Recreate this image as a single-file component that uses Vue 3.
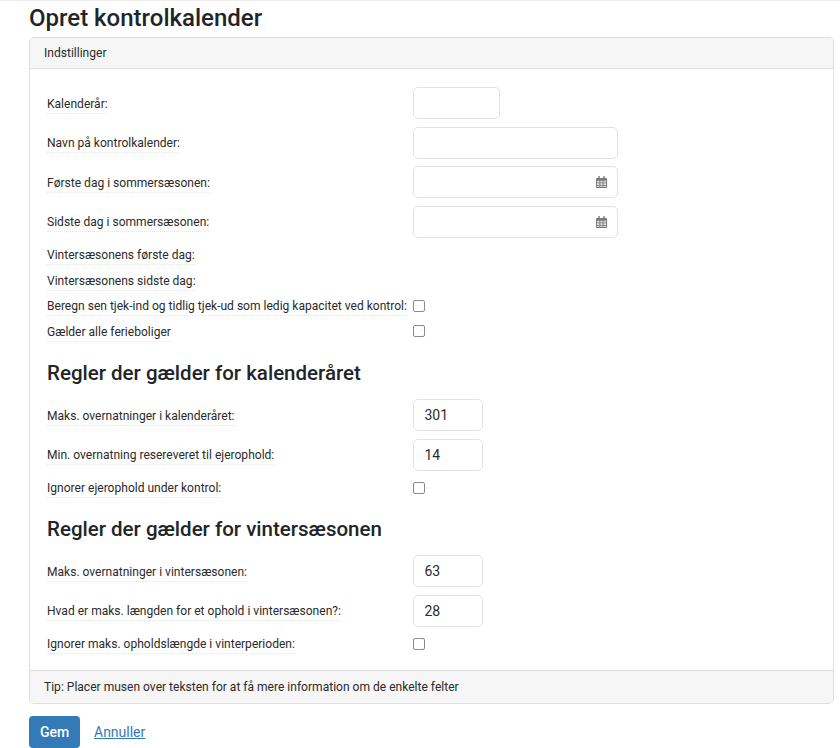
<template>
  <div class="page">
    <h1 class="title">Opret kontrolkalender</h1>

    <div class="panel">
      <div class="panel-heading">Indstillinger</div>

      <div class="panel-body">
        <div class="row row-input">
          <label class="label"><span>Kalenderår:</span></label>
          <input class="field field-year" type="text" />
        </div>
        <div class="row row-input">
          <label class="label"><span>Navn på kontrolkalender:</span></label>
          <input class="field field-wide" type="text" />
        </div>
        <div v-for="text in dateRows" :key="text" class="row row-input">
          <label class="label"><span>{{ text }}</span></label>
          <div class="date-wrap">
            <input class="field field-wide" type="text" />
            <svg class="cal-icon" viewBox="0 0 12 13" aria-hidden="true">
              <path d="M1 2h10a1 1 0 0 1 1 1v9a1 1 0 0 1-1 1H1a1 1 0 0 1-1-1V3a1 1 0 0 1 1-1z" fill="#7a7a7a" />
              <rect x="2.5" y="0" width="1.6" height="3" rx=".6" fill="#7a7a7a" />
              <rect x="7.9" y="0" width="1.6" height="3" rx=".6" fill="#7a7a7a" />
              <path d="M1 5h2.8v2H1zM4.7 5h2.6v2H4.7zM8.2 5H11v2H8.2zM1 7.8h2.8v2H1zM4.7 7.8h2.6v2H4.7zM8.2 7.8H11v2H8.2zM1 10.5h2.8V12H1zM4.7 10.5h2.6V12H4.7zM8.2 10.5H11V12H8.2z" fill="#dcdcdc" />
            </svg>
          </div>
        </div>

        <div class="row row-text">
          <label class="label"><span>Vintersæsonens første dag:</span></label>
        </div>
        <div class="row row-text">
          <label class="label"><span>Vintersæsonens sidste dag:</span></label>
        </div>
        <div class="row row-text">
          <label class="label"><span>Beregn sen tjek-ind og tidlig tjek-ud som ledig kapacitet ved kontrol:</span></label>
          <input class="check" type="checkbox" />
        </div>
        <div class="row row-text">
          <label class="label"><span>Gælder alle ferieboliger</span></label>
          <input class="check" type="checkbox" />
        </div>

        <template v-for="section in sections" :key="section.title">
          <h2 class="section-title">{{ section.title }}</h2>
          <div v-for="item in section.inputs" :key="item.label" class="row row-input">
            <label class="label"><span>{{ item.label }}</span></label>
            <input class="field field-num" type="text" :value="item.value" />
          </div>
          <div class="row row-text">
            <label class="label"><span>{{ section.check }}</span></label>
            <input class="check" type="checkbox" />
          </div>
        </template>
      </div>

      <div class="panel-footer">Tip: Placer musen over teksten for at få mere information om de enkelte felter</div>
    </div>

    <div class="actions">
      <button class="btn-save" type="button">Gem</button>
      <a class="cancel" href="#">Annuller</a>
    </div>
  </div>
</template>

<script setup>
const dateRows = ['Første dag i sommersæsonen:', 'Sidste dag i sommersæsonen:']

const sections = [
  {
    title: 'Regler der gælder for kalenderåret',
    inputs: [
      { label: 'Maks. overnatninger i kalenderåret:', value: '301' },
      { label: 'Min. overnatning resereveret til ejerophold:', value: '14' }
    ],
    check: 'Ignorer ejerophold under kontrol:'
  },
  {
    title: 'Regler der gælder for vintersæsonen',
    inputs: [
      { label: 'Maks. overnatninger i vintersæsonen:', value: '63' },
      { label: 'Hvad er maks. længden for et ophold i vintersæsonen?:', value: '28' }
    ],
    check: 'Ignorer maks. opholdslængde i vinterperioden:'
  }
]
</script>

<style>
html, body {
  margin: 0;
  background: #fff;
}
</style>

<style scoped>
.page {
  height: 748px;
  overflow: hidden;
  box-sizing: border-box;
  padding: 0 6px 0 29px;
  border-top: 1px solid #ececec;
  font-family: Roboto, "Liberation Sans", sans-serif;
  font-size: 12.05px;
  color: #2b2b2b;
}

.title {
  margin: 0;
  height: 36px;
  line-height: 34px;
  font-size: 24px;
  font-weight: 500;
  color: #212529;
}

.panel {
  border: 1px solid #dfdfdf;
  border-radius: 5px;
  overflow: hidden;
}

.panel-heading {
  height: 30px;
  line-height: 30px;
  padding: 0 14px;
  background: #f6f6f6;
  border-bottom: 1px solid #dfdfdf;
}

.panel-body {
  padding: 18.4px 17px 13.6px;
}

.row {
  display: flex;
  align-items: center;
}

.row-input {
  height: 32px;
  margin-bottom: 7.4px;
}

.row-text {
  height: 25.7px;
}

.row-input + .row-text {
  margin-top: -3.4px;
}

.label {
  flex: 0 0 366px;
  padding-top: 1px;
  white-space: nowrap;
}

.label span {
  padding-bottom: 2px;
  border-bottom: 1px dotted #e6e6e6;
}

.field {
  box-sizing: border-box;
  height: 32px;
  padding: 0 10.5px;
  border: 1px solid #e2e2e2;
  border-radius: 5px;
  background: #fff;
  font: inherit;
  font-size: 14px;
  color: #2b2b2b;
  outline: none;
}

.field-year {
  width: 87px;
}

.field-wide {
  width: 204.5px;
}

.field-num {
  width: 70px;
}

.date-wrap {
  position: relative;
  width: 204.5px;
  height: 32px;
}

.cal-icon {
  position: absolute;
  right: 10.5px;
  top: 10px;
  width: 11px;
  height: 12px;
}

.check {
  appearance: none;
  box-sizing: border-box;
  width: 12px;
  height: 12px;
  margin: 0;
  border: 1px solid #8a8a8a;
  border-radius: 2px;
  background: #fff;
}

.section-title {
  margin: 0;
  height: 55px;
  padding-top: 15px;
  box-sizing: border-box;
  line-height: 28px;
  font-size: 20.5px;
  font-weight: 500;
  color: #212529;
}

.panel-footer {
  height: 32px;
  line-height: 32px;
  padding: 0 14px;
  background: #f6f6f6;
  border-top: 1px solid #dfdfdf;
}

.actions {
  display: flex;
  align-items: center;
  gap: 14px;
  margin-top: 12px;
}

.btn-save {
  width: 51px;
  height: 32px;
  padding: 0;
  border: none;
  border-radius: 4px;
  background: #337ab7;
  color: #fff;
  font: inherit;
  font-size: 14px;
  font-weight: 500;
}

.cancel {
  color: #337ab7;
  font-size: 14px;
  text-decoration: underline;
}
</style>
